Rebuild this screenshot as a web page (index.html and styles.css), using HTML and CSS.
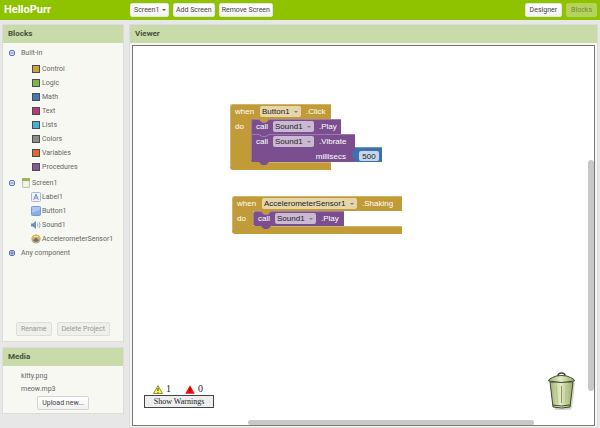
FILE: index.html
```html
<!DOCTYPE html>
<html lang="en">
<head>
    <meta charset="UTF-8">
    <meta name="viewport" content="width=device-width, initial-scale=1.0">
    <title>HelloPurr</title>
    <link rel="stylesheet" href="styles.css">
</head>
<body>
    <header class="topbar">
        <h1>HelloPurr</h1>
        <div class="screen-tools">
            <span class="dropdown">
                <select class="btn" aria-label="Screen"><option>Screen1</option></select>
            </span>
            <button class="btn">Add Screen</button>
            <button class="btn">Remove Screen</button>
        </div>
        <div class="view-tools">
            <button class="btn">Designer</button>
            <button class="btn current" disabled>Blocks</button>
        </div>
    </header>

    <div class="workarea">
        <aside class="sidebar">
            <section class="panel blocks-panel">
                <h2>Blocks</h2>
                <ul class="tree">
                    <li>
                        <div class="branch">
                            <svg class="toggle" viewBox="0 0 6 6"><rect x="0.5" y="0.5" width="5" height="5" rx="1.5"/><path d="M1.5 3h3"/></svg>
                            Built-in
                        </div>
                        <ul class="categories">
                            <li><i class="swatch control"></i>Control</li>
                            <li><i class="swatch logic"></i>Logic</li>
                            <li><i class="swatch math"></i>Math</li>
                            <li><i class="swatch text"></i>Text</li>
                            <li><i class="swatch lists"></i>Lists</li>
                            <li><i class="swatch colors"></i>Colors</li>
                            <li><i class="swatch variables"></i>Variables</li>
                            <li><i class="swatch procedures"></i>Procedures</li>
                        </ul>
                    </li>
                    <li>
                        <div class="branch">
                            <svg class="toggle" viewBox="0 0 6 6"><rect x="0.5" y="0.5" width="5" height="5" rx="1.5"/><path d="M1.5 3h3"/></svg>
                            <svg class="icon screen-icon" viewBox="0 0 8 10"><rect x="0.5" y="0.5" width="7" height="9" rx="0.5" fill="#e9ebe4" stroke="#c3c7b8"/><path d="M0 0h8v3H0z" fill="#9fb55c"/><path d="M2 5h4M2 7h4" stroke="#fff"/></svg>
                            Screen1
                        </div>
                        <ul class="components">
                            <li>
                                <svg class="icon" viewBox="0 0 10 10"><rect x="0.5" y="0.5" width="9" height="9" rx="1" fill="#edf2fb" stroke="#a9b7d4"/><path d="M2.7 7.8L5 2.2l2.3 5.6M3.6 6h2.8" fill="none" stroke="#7187c0"/></svg>
                                Label1
                            </li>
                            <li>
                                <svg class="icon" viewBox="0 0 10 10"><rect x="0.5" y="0.5" width="9" height="9" rx="1" fill="#86aee6" stroke="#7a9acc"/><path d="M1 1h8v3L1 7z" fill="#a9c7f0"/></svg>
                                Button1
                            </li>
                            <li>
                                <svg class="icon" viewBox="0 0 10 10"><path d="M0 3.5h2L5 1v8L2 6.5H0z" fill="#6c8fc4"/><path d="M6.3 3.3q1.2 1.7 0 3.4M8 2q2.2 3 0 6" fill="none" stroke="#8fb0dc"/></svg>
                                Sound1
                            </li>
                            <li>
                                <svg class="icon" viewBox="0 0 10 10"><circle cx="5" cy="5" r="4.6" fill="#b9ab96"/><path d="M.5 4.5a4.6 4.6 0 0 1 9 0z" fill="#d9b65c"/><path d="M2 6.5l3-3 3 3-3 1.5z" fill="#776b63"/><path d="M3 2.5h4" stroke="#f3e2a8"/></svg>
                                AccelerometerSensor1
                            </li>
                        </ul>
                    </li>
                    <li>
                        <div class="branch">
                            <svg class="toggle" viewBox="0 0 6 6"><rect x="0.5" y="0.5" width="5" height="5" rx="1.5"/><path d="M1 3h4M3 1v4"/></svg>
                            Any component
                        </div>
                    </li>
                </ul>
                <div class="panel-actions">
                    <button class="btn" disabled>Rename</button>
                    <button class="btn" disabled>Delete Project</button>
                </div>
            </section>

            <section class="panel media-panel">
                <h2>Media</h2>
                <ul class="media">
                    <li>kitty.png</li>
                    <li>meow.mp3</li>
                </ul>
                <button class="btn upload">Upload new...</button>
            </section>
        </aside>

        <main class="panel viewer">
            <h2>Viewer</h2>
            <div class="canvas">
                <!-- when Button1.Click -->
                <div class="block button-click">
                    <svg class="shape" width="153" height="66" viewBox="0 0 153 66">
                        <path class="event" d="M3 0H101V58H101V66H3Q0 66 0 63V3Q0 0 3 0Z"/>
                        <path class="edge" d="M.5 63V3Q.5 .5 3 .5H101"/>
                        <path class="call" d="M23 15h6l3 3h4l3-3H111V30H125V58H39l-3 3h-4l-3-3H23q-2 0-2-2V17q0-2 2-2z"/>
                        <path class="edge" d="M21.500 56V17.500q0-2 2-2h5.500l3 3h4l3-3H111M22 30.500h7l3 2h4l3-2H125M39 58.500H101"/>
                        <path class="number" d="M125 43H152V58H125V54q-3 1-3-3t3-4z"/>
                        <path class="edge" d="M125.500 43.500H152"/>
                    </svg>
                    <div class="row head">
                        <span class="word">when</span>
                        <span class="dropdown field"><select aria-label="Button"><option>Button1</option></select></span>
                        <span>.Click</span>
                    </div>
                    <div class="row">
                        <span class="do">do</span>
                        <span class="word">call</span>
                        <span class="dropdown field"><select aria-label="Sound to play"><option>Sound1</option></select></span>
                        <span>.Play</span>
                    </div>
                    <div class="row">
                        <span class="do"></span>
                        <span class="word">call</span>
                        <span class="dropdown field"><select aria-label="Sound to vibrate"><option>Sound1</option></select></span>
                        <span>.Vibrate</span>
                    </div>
                    <div class="row argument">
                        <label for="millisecs">millisecs</label>
                        <input id="millisecs" type="text" value="500">
                    </div>
                </div>

                <!-- when AccelerometerSensor1.Shaking -->
                <div class="block sensor-shaking">
                    <svg class="shape" width="170" height="38" viewBox="0 0 170 38">
                        <path class="event" d="M3 0H170V15H21V30H170V38H3Q0 38 0 35V3Q0 0 3 0Z"/>
                        <path class="edge" d="M.5 35V3Q.5 .5 3 .5H170M39 30.500H170"/>
                        <path class="event" d="M26 14h15v5H26z"/>
                        <path class="call" d="M23 15h6l3 3h4l3-3H112V30H39l-3 3h-4l-3-3H23q-2 0-2-2V17q0-2 2-2z"/>
                        <path class="edge" d="M21.500 28V17.500q0-2 2-2h5.500l3 3h4l3-3H112"/>
                    </svg>
                    <div class="row head">
                        <span class="word">when</span>
                        <span class="dropdown field"><select aria-label="Sensor"><option>AccelerometerSensor1</option></select></span>
                        <span>.Shaking</span>
                    </div>
                    <div class="row">
                        <span class="do">do</span>
                        <span class="word">call</span>
                        <span class="dropdown field"><select aria-label="Sound for shaking"><option>Sound1</option></select></span>
                        <span>.Play</span>
                    </div>
                </div>

                <div class="warnings">
                    <div class="counts">
                        <span><svg viewBox="0 0 10 9"><path d="M5 .7L9.500 8.500H.5z" fill="#ffff3c" stroke="#8f8f32"/><path d="M5 3v3M5 6.800v1" stroke="#333"/></svg>1</span>
                        <span><svg viewBox="0 0 10 9"><path d="M5 .3L9.800 8.800H.2z" fill="#ee1010"/><path d="M5 3v3M5 6.800v1" stroke="#8c0000"/></svg>0</span>
                    </div>
                    <button>Show Warnings</button>
                </div>

                <svg class="trash" viewBox="0 0 30 38">
                    <defs>
                        <linearGradient id="can" x1="0" x2="1">
                            <stop offset="0" stop-color="#9fae70"/>
                            <stop offset=".45" stop-color="#e4edc4"/>
                            <stop offset="1" stop-color="#9aab6a"/>
                        </linearGradient>
                    </defs>
                    <path d="M6 11h22l-3 25-2 2H8z" fill="#d4d4d4"/>
                    <path d="M3 10h23l-3 25q-8 2-17 0z" fill="url(#can)" stroke="#3f4a2c"/>
                    <path d="M6 33q8 2 17 0" fill="none" stroke="#3f4a2c"/>
                    <path d="M9 13l1.500 18M19.500 13L18.500 31" stroke="#b4c28a"/>
                    <path d="M14.500 14v17" stroke="#87946a"/>
                    <path d="M11 4q0-3 3.500-3T18 4" fill="none" stroke="#3f4a2c" stroke-width="1.500"/>
                    <path d="M1.500 9q0-2 4-3.500 3-2 9-2t9 2q4 1.500 4 3.500-13 3-26 0z" fill="url(#can)" stroke="#3f4a2c"/>
                </svg>

                <div class="scroll-y"></div>
                <div class="scroll-x"></div>
            </div>
        </main>
    </div>
</body>
</html>
```
FILE: styles.css
```css
* {
    box-sizing: border-box;
}
body {
    margin: 0;
    min-height: 100vh;
    display: flex;
    flex-direction: column;
    background-color: #e7e7e7;
    color: #666;
    font-family: Roboto, sans-serif;
    font-size: 7px;
}
ul {
    list-style: none;
    margin: 0;
    padding: 0;
}
button, select, input {
    font: inherit;
}

/* top bar */
.topbar {
    display: flex;
    align-items: center;
    height: 20px;
    padding: 0 3px 0 4px;
    background-color: #8fc300;
}
h1 {
    width: 126px;
    margin: 0;
    color: #fff;
    font-size: 11px;
    line-height: 16px;
}
.screen-tools {
    display: flex;
    gap: 4px;
}
.view-tools {
    display: flex;
    gap: 4px;
    margin-left: auto;
}
.btn {
    height: 14px;
    padding: 0 4px;
    border: 1px solid #e4e4e4;
    border-radius: 2px;
    background: linear-gradient(#fff, #f1f1f1);
    color: #444;
    line-height: 12px;
    white-space: nowrap;
}
.btn:disabled {
    border-color: #ddd;
    background: #efefeb;
    color: #999;
}
.screen-tools .btn {
    padding: 0 2px;
}
.btn.current:disabled {
    border-color: #b5d35c;
    background: #b5d35c;
    color: #74893a;
}
.dropdown {
    position: relative;
    display: inline-flex;
}
.dropdown select {
    appearance: none;
}
.screen-tools .dropdown .btn {
    padding: 0 8px 0 3px;
}
.dropdown::after {
    content: "";
    position: absolute;
    top: 6px;
    right: 3px;
    border: 2px solid transparent;
    border-top-color: #555;
    border-bottom: 0;
    pointer-events: none;
}

/* panels */
.workarea {
    flex: 1;
    display: flex;
    gap: 5px;
    padding: 4px 2px 0;
}
.sidebar {
    flex: 0 0 122px;
    display: flex;
    flex-direction: column;
    gap: 5px;
    padding-bottom: 14px;
}
.panel {
    display: flex;
    flex-direction: column;
    border: 1px solid #dcdcdc;
    background-color: #f7f8f2;
}
h2 {
    margin: 0;
    padding: 0 5px;
    background-color: #c9dba8;
    color: #47523c;
    font-size: 8px;
    line-height: 18px;
}
.blocks-panel {
    flex: 1;
}
.tree {
    padding: 3px 6px;
}
.branch, .tree li li {
    display: flex;
    align-items: center;
    height: 14px;
}
.categories {
    padding: 2px 0 2px 23px;
}
.components {
    padding-left: 22px;
}
.toggle {
    width: 6px;
    height: 6px;
    margin-right: 6px;
    fill: #e4e9fb;
    stroke: #5d70b8;
}
.swatch {
    width: 8px;
    height: 8px;
    margin-right: 2px;
    border: 1px solid #4b4b4b;
}
.control { background-color: #cfa23c; }
.logic { background-color: #7cb652; }
.math { background-color: #4279b8; }
.text { background-color: #b83a73; }
.lists { background-color: #46b0d6; }
.colors { background-color: #8c8c8c; }
.variables { background-color: #d96c34; }
.procedures { background-color: #85569a; }
.icon {
    width: 10px;
    height: 10px;
    margin-right: 1px;
}
.panel-actions {
    display: flex;
    justify-content: center;
    gap: 5px;
    margin: auto 0 5px;
}
.media {
    padding: 4px 18px 0;
    line-height: 13px;
}
.upload {
    align-self: center;
    margin-bottom: 3px;
    border-color: #d3d3d3;
}

/* viewer */
.viewer {
    flex: 1;
    min-width: 0;
}
.canvas {
    position: relative;
    flex: 1;
    margin: 2px 2px 1px;
    border: 1px solid #777;
    background-color: #fff;
}
.block {
    position: absolute;
    color: #fff;
    font-family: "Liberation Sans", Arial, sans-serif;
    font-size: 8px;
}
.button-click {
    top: 58px;
    left: 97px;
}
.sensor-shaking {
    top: 150px;
    left: 99px;
}
.shape {
    position: absolute;
    top: 0;
    left: 0;
}
.event { fill: #c09b37; }
.call { fill: #7b4f8f; }
.number { fill: #3d71ae; }
.edge {
    fill: none;
    stroke: #fff;
    stroke-opacity: .25;
}
.row {
    position: relative;
    display: flex;
    align-items: center;
    height: 15px;
    padding-left: 5px;
    white-space: nowrap;
}
.row .word {
    width: 17px;
}
.row.head .word {
    width: 25px;
}
.do {
    width: 21px;
}
.field {
    margin-right: 5px;
}
.field select {
    height: 11px;
    padding: 0 11px 0 2px;
    border: 0;
    border-radius: 2px;
    background-color: #cbb8d3;
    color: #222;
}
.head .field select {
    background-color: #e5d5a8;
}
.field::after {
    top: 5px;
    border-top-color: #8a7a70;
}
.argument {
    justify-content: flex-end;
    width: 149px;
    height: 14px;
    gap: 13px;
}
.argument input {
    width: 20px;
    height: 10px;
    padding: 0;
    border: 0;
    border-radius: 2px;
    background-color: #c5d6e8;
    color: #222;
    text-align: center;
}

/* overlays in the canvas corners */
.warnings {
    position: absolute;
    bottom: 17px;
    left: 11px;
    color: #222;
    font-family: "Liberation Serif", "Times New Roman", serif;
    font-size: 8px;
}
.counts {
    display: flex;
    gap: 14px;
    padding-left: 9px;
    font-size: 10px;
    line-height: 12px;
}
.counts span {
    display: flex;
    align-items: center;
    gap: 3px;
}
.counts svg {
    width: 10px;
    height: 9px;
}
.warnings button {
    display: block;
    width: 70px;
    height: 13px;
    padding: 0;
    border: 1px solid #444;
    background-color: #eee;
    color: #222;
    line-height: 11px;
}
.trash {
    position: absolute;
    right: 17px;
    bottom: 15px;
    width: 30px;
    height: 38px;
}
.scroll-y, .scroll-x {
    position: absolute;
    border-radius: 3px;
    background-color: #c8c8c8;
}
.scroll-y {
    top: 30%;
    right: 0;
    width: 6px;
    height: 61%;
}
.scroll-x {
    left: 25%;
    bottom: 0;
    width: 62%;
    height: 5px;
}
```
